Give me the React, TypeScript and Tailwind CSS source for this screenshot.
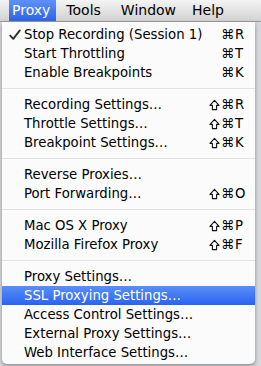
type Item = { label: string; shift?: boolean; key?: string; checked?: boolean; active?: boolean };

const sections: Item[][] = [
  [
    { label: 'Stop Recording (Session 1)', key: 'R', checked: true },
    { label: 'Start Throttling', key: 'T' },
    { label: 'Enable Breakpoints', key: 'K' },
  ],
  [
    { label: 'Recording Settings…', shift: true, key: 'R' },
    { label: 'Throttle Settings…', shift: true, key: 'T' },
    { label: 'Breakpoint Settings…', shift: true, key: 'K' },
  ],
  [
    { label: 'Reverse Proxies…' },
    { label: 'Port Forwarding…', shift: true, key: 'O' },
  ],
  [
    { label: 'Mac OS X Proxy', shift: true, key: 'P' },
    { label: 'Mozilla Firefox Proxy', shift: true, key: 'F' },
  ],
  [
    { label: 'Proxy Settings…' },
    { label: 'SSL Proxying Settings…', active: true },
    { label: 'Access Control Settings…' },
    { label: 'External Proxy Settings…' },
    { label: 'Web Interface Settings…' },
  ],
];

function Check() {
  return (
    <svg viewBox="0 0 12 12" className="absolute left-[7px] top-[4px] h-[12px] w-[12px]" aria-hidden>
      <path d="M1.2 6.6 L4.3 9.8 L10.8 1.4" fill="none" stroke="#333" strokeWidth="1.9" strokeLinecap="round" strokeLinejoin="round" />
    </svg>
  );
}

function Shift() {
  return (
    <svg viewBox="0 0 12 12" className="mx-px h-[12px] w-[11px]" aria-hidden>
      <path d="M6 1 L11 6.4 H8.3 V11 H3.7 V6.4 H1 Z" fill="none" stroke="#111" strokeWidth="1.2" strokeLinejoin="round" />
    </svg>
  );
}

function MenuRow({ item }: { item: Item }) {
  return (
    <div
      className={`relative flex h-[19px] items-center pl-[22px] pr-[6px] ${
        item.active ? 'bg-gradient-to-b from-[#5b8ef7] to-[#2a62f0] text-white' : 'text-black'
      }`}
    >
      {item.checked && <Check />}
      <span className="flex-1 whitespace-nowrap">{item.label}</span>
      {item.key && (
        <span className="flex items-center whitespace-nowrap">
          {item.shift && <Shift />}
          <span className="w-[13px] text-center">⌘</span>
          <span className="ml-px w-[14px]">{item.key}</span>
        </span>
      )}
    </div>
  );
}

export default function App() {
  return (
    <div
      className="flex h-[366px] w-[261px] flex-col overflow-hidden bg-[#d6d8dc] text-[13.25px]"
      style={{ fontFamily: '"DejaVu Sans", "Liberation Sans", sans-serif' }}
    >
      <div className="flex h-[22px] shrink-0 items-stretch border-b border-[#9a9a9a] bg-gradient-to-b from-[#f4f4f4] to-[#d2d2d2] text-[14px] text-black">
        <div className="ml-[9px] flex items-center bg-gradient-to-b from-[#5e92f8] to-[#2d63ea] pl-[3px] pr-[6px] text-white">Proxy</div>
        <div className="ml-[10px] flex items-center">Tools</div>
        <div className="ml-[20px] flex items-center">Window</div>
        <div className="ml-[16px] flex items-center">Help</div>
      </div>
      <div className="ml-[2px] w-[253px] rounded-b-[5px] bg-[#fbfbfb] pb-[2px] pt-[3px] shadow-[0_2px_4px_rgba(0,0,0,0.35)]">
        {sections.map((section, i) => (
          <div key={i}>
            {i > 0 && (
              <div className="flex h-[13px] items-center">
                <div className="h-px w-full bg-[#e2e2e2]" />
              </div>
            )}
            {section.map((item) => (
              <MenuRow key={item.label} item={item} />
            ))}
          </div>
        ))}
      </div>
    </div>
  );
}
